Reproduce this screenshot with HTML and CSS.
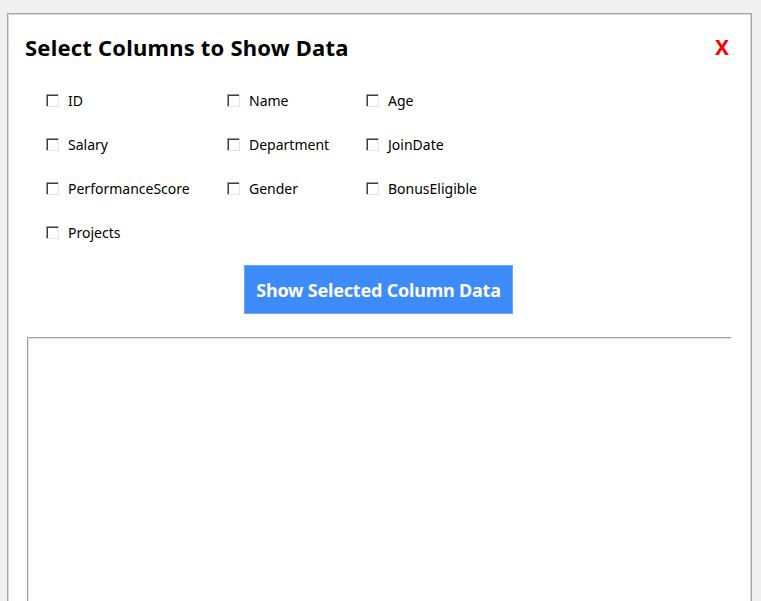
FILE: index.html
```html
<!DOCTYPE html>
<html>
<head>
<meta charset="utf-8">
<link rel="stylesheet" href="styles.css">
</head>
<body>
<div class="window">
  <div class="header">
    <h1 class="title">Select Columns to Show Data</h1>
    <span class="close">X</span>
  </div>
  <div class="grid">
    <label class="item"><span class="box"></span><span class="lbl">ID</span></label>
    <label class="item"><span class="box"></span><span class="lbl">Name</span></label>
    <label class="item"><span class="box"></span><span class="lbl">Age</span></label>
    <label class="item"><span class="box"></span><span class="lbl">Salary</span></label>
    <label class="item"><span class="box"></span><span class="lbl">Department</span></label>
    <label class="item"><span class="box"></span><span class="lbl">JoinDate</span></label>
    <label class="item"><span class="box"></span><span class="lbl">PerformanceScore</span></label>
    <label class="item"><span class="box"></span><span class="lbl">Gender</span></label>
    <label class="item"><span class="box"></span><span class="lbl">BonusEligible</span></label>
    <label class="item"><span class="box"></span><span class="lbl">Projects</span></label>
  </div>
  <div class="actions">
    <button class="btn">Show Selected Column Data</button>
  </div>
  <div class="output"></div>
</div>
</body>
</html>
```
FILE: styles.css
```css
html, body {
  margin: 0;
  height: 100%;
  overflow: hidden;
}
body {
  background: #f0f0f0;
  padding: 13px 9px 0 7px;
  box-sizing: border-box;
  font-family: "Noto Sans", "Open Sans", sans-serif;
}
.window {
  background: #fff;
  border: 1px solid #a6a6a6;
  border-bottom: none;
  box-shadow: inset 1px 1px 0 #d9d9d9, inset -1px 0 0 #d9d9d9;
  height: 600px;
  box-sizing: border-box;
  display: flex;
  flex-direction: column;
}
.header {
  display: flex;
  justify-content: space-between;
  align-items: center;
  padding: 18px 21px 0 17px;
  height: 30px;
}
.title {
  margin: 0;
  font-size: 22px;
  font-weight: 700;
  color: #000;
  letter-spacing: 0.2px;
}
.close {
  color: #ff0000;
  font-weight: 700;
  font-size: 21px;
  margin-right: 1px;
}
.grid {
  display: grid;
  grid-template-columns: 181px 139px 1fr;
  grid-auto-rows: 44px;
  padding: 16px 0 0 38px;
}
.item {
  display: flex;
  align-items: center;
  gap: 9px;
  font-size: 14px;
  color: #000;
}
.box {
  width: 13px;
  height: 13px;
  box-sizing: border-box;
  background: #fff;
  border: 1px solid;
  border-color: #a0a0a0 #e3e3e3 #e3e3e3 #a0a0a0;
  box-shadow: inset 1px 1px 0 #3c3c3c;
  flex: none;
}
.actions {
  display: flex;
  justify-content: center;
  padding-top: 11px;
}
.btn {
  width: 269px;
  height: 49px;
  background: #3d8bf8;
  border: 1px solid #6aa6fa;
  color: #fff;
  font-family: "Noto Sans", "Open Sans", sans-serif;
  font-weight: 700;
  font-size: 18px;
  letter-spacing: -0.2px;
  margin-left: -2px;
}
.output {
  flex: 1;
  margin: 23px 20px 0 19px;
  border-top: 1px solid #a0a0a0;
  border-left: 1px solid #a0a0a0;
  box-shadow: inset 1px 1px 0 #e3e3e3;
}
```
